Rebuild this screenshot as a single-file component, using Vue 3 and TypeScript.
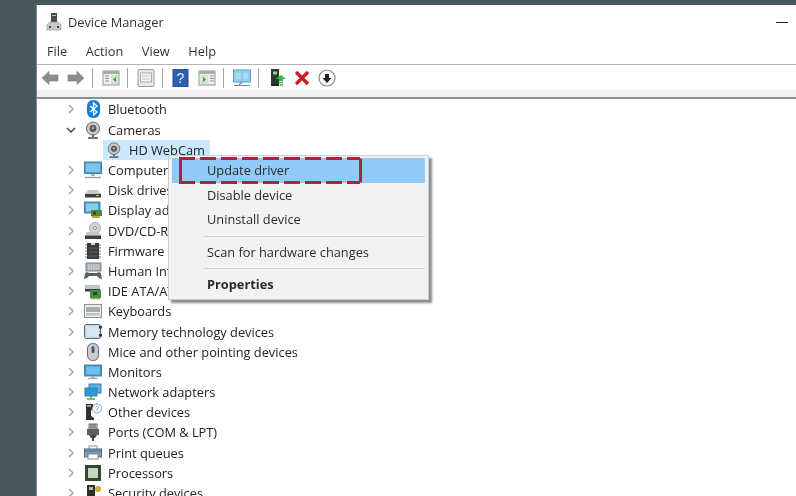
<script setup lang="ts">
interface Row { label: string; icon: string; open?: boolean; child?: boolean }

const icons: Record<string, string> = {
  bluetooth: '<rect x="3" y="0" width="13" height="18" rx="6" fill="#0f7fd8"/><path d="M6 6l7 6-3.500 3V3L13 6l-7 6" fill="none" stroke="#fff" stroke-width="1.300"/>',
  camera: '<circle cx="9" cy="7.500" r="6.500" fill="#c9c9c9" stroke="#666"/><circle cx="9" cy="7.500" r="3.400" fill="#555"/><circle cx="9" cy="7" r="1.400" fill="#aaa"/><path d="M9 14v2" stroke="#666" stroke-width="2"/><path d="M4 17h10" stroke="#555" stroke-width="1.600"/>',
  computer: '<rect x="0.500" y="1" width="17" height="11.500" fill="#3ba3dc" stroke="#5c7f94"/><rect x="2" y="2.500" width="14" height="8.500" fill="#7cc6ee"/><path d="M7 13h4v2H7z" fill="#aab7bf"/><path d="M1 16.500h16" stroke="#8aa0ad" stroke-width="1.400"/>',
  disk: '<path d="M4 9h10l3 4H1z" fill="#c6cac8"/><rect x="1" y="13" width="16" height="3.500" fill="#3d3d3d"/><rect x="12" y="14" width="3" height="1" fill="#8d8"/>',
  display: '<rect x="0.500" y="1" width="15.500" height="11" fill="#3c9ed6" stroke="#5a7d90"/><rect x="2" y="2.500" width="12" height="8" fill="#8accec"/><rect x="7" y="9" width="11" height="6" fill="#4d8a3f"/><path d="M8 15h8v2H8z" fill="#c9a640"/><rect x="9" y="10.500" width="3" height="3" fill="#2c4f2a"/>',
  dvd: '<circle cx="11" cy="6" r="5.500" fill="#d4d4d4" stroke="#aaa"/><circle cx="11" cy="6" r="1.500" fill="#fff" stroke="#888"/><path d="M3 10h12l2 3.500H1z" fill="#c5c8c6"/><rect x="1" y="13.500" width="16" height="3.500" fill="#3d3d3d"/>',
  firmware: '<rect x="3" y="1" width="12" height="16" fill="#3b3b3b"/><path d="M7 1h4v2H7z" fill="#ddd"/><path d="M1 3h2M1 6h2M1 9h2M1 12h2M1 15h2M15 3h2M15 6h2M15 9h2M15 12h2M15 15h2" stroke="#777"/><path d="M5 6h8M5 10h8M5 14h8" stroke="#666"/>',
  human: '<rect x="2" y="1" width="15" height="8" fill="#a9b0b8" stroke="#78828c"/><path d="M4 3h11M4 5h11M4 7h11" stroke="#e4e8ea" stroke-dasharray="1.500 1"/><path d="M0 17l1-5c0-2 3-2 4-1h8c1-1 4-1 4 1l1 5-3-1-2-2H5l-2 2z" fill="#54606a"/>',
  ide: '<rect x="1" y="3" width="15" height="4" fill="#bfc5c3"/><rect x="1" y="7" width="15" height="2.500" fill="#3f3f3f"/><rect x="6" y="8" width="11" height="8" fill="#3d9148"/><path d="M7 16h9v1.500H7z" fill="#c9a640"/><rect x="9" y="10" width="4" height="3" fill="#1d4a24"/>',
  keyboard: '<rect x="0.500" y="2.500" width="17" height="13" fill="#eceeee" stroke="#8c9296"/><rect x="2" y="5" width="14" height="5" fill="#a7acb0"/><rect x="2" y="11" width="14" height="2.500" fill="#c0c4c6"/>',
  memory: '<rect x="0.500" y="1.500" width="16" height="14" rx="2" fill="#c4d8e6" stroke="#5a6670"/><rect x="15" y="3" width="3" height="2.500" fill="#333"/><rect x="15" y="11" width="3" height="2.500" fill="#333"/><rect x="2.500" y="3.500" width="12" height="10" fill="#d9e6ef"/>',
  mouse: '<rect x="3.500" y="0.500" width="11" height="17" rx="5" fill="#c8ccd2" stroke="#5e6670"/><rect x="7.500" y="3" width="3" height="7" rx="1.500" fill="#4f5965"/>',
  monitor: '<rect x="0.500" y="2" width="17" height="11" fill="#2f9ad8" stroke="#5b8096"/><rect x="2" y="3.500" width="14" height="8" fill="#6cc0ef"/><path d="M7 13h4v2H7z" fill="#aab7bf"/><path d="M4 15.500h10" stroke="#9ab" stroke-width="1.200"/>',
  network: '<rect x="5" y="1" width="12" height="9" fill="#5bb0e3" stroke="#3f7ca5"/><rect x="1" y="5" width="12" height="8" fill="#2f96d6" stroke="#3f7ca5"/><path d="M7 13v2M3 16h8" stroke="#46b04c" stroke-width="1.600"/>',
  other: '<path d="M2 1h7v3l-2 4v5l3 2v2H2z" fill="#2f2f2f"/><path d="M3 2h4v2H3z" fill="#8fae8a"/><circle cx="13" cy="5.500" r="4.500" fill="#fff" stroke="#7ca3cb"/><text x="13" y="8" font-size="7" font-family="Liberation Sans" text-anchor="middle" fill="#5a84b0">?</text>',
  ports: '<rect x="5" y="1" width="8" height="5" fill="#b9bcbc" stroke="#777"/><path d="M7 1v4M9 1v4M11 1v4" stroke="#666"/><rect x="3" y="6" width="12" height="6" fill="#5a5f62"/><path d="M5 12h8l-2 3H7z" fill="#444"/><rect x="8" y="15" width="2" height="3" fill="#444"/>',
  print: '<rect x="5" y="2" width="8" height="4" fill="#fff" stroke="#889"/><rect x="0.500" y="5" width="17" height="8" fill="#7f99ad" stroke="#566875"/><rect x="4" y="10" width="10" height="5" fill="#fff" stroke="#889"/><path d="M1 7h16" stroke="#3a88c0" stroke-width="1.500"/>',
  processor: '<rect x="1" y="1" width="16" height="16" fill="#2f4a2f"/><rect x="4" y="4" width="10" height="10" fill="#c5d6bf"/>',
  security: '<rect x="3" y="1" width="8" height="17" fill="#2f2f2f"/><rect x="5" y="3" width="4" height="3" fill="#aac2a4"/><circle cx="14" cy="5" r="3" fill="#d9a63d"/>',
}

const rows: Row[] = [
  { label: 'Bluetooth', icon: 'bluetooth' },
  { label: 'Cameras', icon: 'camera', open: true },
  { label: 'HD WebCam', icon: 'camera', child: true },
  { label: 'Computer', icon: 'computer' },
  { label: 'Disk drives', icon: 'disk' },
  { label: 'Display adapters', icon: 'display' },
  { label: 'DVD/CD-ROM drives', icon: 'dvd' },
  { label: 'Firmware', icon: 'firmware' },
  { label: 'Human Interface Devices', icon: 'human' },
  { label: 'IDE ATA/ATAPI controllers', icon: 'ide' },
  { label: 'Keyboards', icon: 'keyboard' },
  { label: 'Memory technology devices', icon: 'memory' },
  { label: 'Mice and other pointing devices', icon: 'mouse' },
  { label: 'Monitors', icon: 'monitor' },
  { label: 'Network adapters', icon: 'network' },
  { label: 'Other devices', icon: 'other' },
  { label: 'Ports (COM & LPT)', icon: 'ports' },
  { label: 'Print queues', icon: 'print' },
  { label: 'Processors', icon: 'processor' },
  { label: 'Security devices', icon: 'security' },
]
</script>

<template>
  <div class="screen">
    <div class="window">
      <header class="title">
        <svg class="app-icon" viewBox="0 0 16 18" width="16" height="18">
          <rect x="5" y="0" width="6" height="9" fill="#4a4a4a" />
          <rect x="6" y="2" width="4" height="1" fill="#bbb" />
          <path d="M4 9h8l3 3v5H1v-5z" fill="#c9c9c9" stroke="#8a8a8a" stroke-width=".6" />
          <rect x="3" y="13" width="2" height="2" fill="#444" />
          <rect x="11" y="13" width="2" height="2" fill="#444" />
        </svg>
        <span class="title-text">Device Manager</span>
        <span class="minimize"></span>
      </header>
      <nav class="menubar">
        <span>File</span>
        <span>Action</span>
        <span>View</span>
        <span>Help</span>
      </nav>
      <div class="toolbar">
        <svg class="tool" viewBox="0 0 18 18"><path d="M1 9l7-6.500V6h9v6H8v3.500z" fill="#8d8d8d" stroke="#777" stroke-width=".6" /></svg>
        <svg class="tool" viewBox="0 0 18 18"><path d="M17 9l-7-6.500V6H1v6h9v3.500z" fill="#8d8d8d" stroke="#777" stroke-width=".6" /></svg>
        <i class="sep"></i>
        <svg class="tool" viewBox="0 0 18 18">
          <rect x="1" y="2" width="16" height="14" fill="#f2f2ee" stroke="#8f938e" />
          <rect x="1" y="2" width="16" height="3" fill="#a8aba6" />
          <path d="M3 7h4M3 9.500h4M3 12h4" stroke="#8a8f88" stroke-width="1.200" />
          <rect x="9" y="6" width="7" height="9" fill="#d5e0d0" />
          <path d="M14 8v5l-3-2.500z" fill="#3f9a48" />
        </svg>
        <i class="sep"></i>
        <svg class="tool" viewBox="0 0 18 18">
          <rect x="1" y="0.500" width="16" height="17" rx="1" fill="#e8e8e6" stroke="#9a9a98" />
          <rect x="3.500" y="4" width="11" height="9" fill="#f4f4f2" stroke="#aaa" />
          <path d="M5 7h8M5 10h8" stroke="#c4c4c2" />
        </svg>
        <i class="sep"></i>
        <svg class="tool" viewBox="0 0 18 18">
          <rect x="1" y="0" width="15" height="18" fill="#2f5fb0" stroke="#244a90" />
          <text x="8.500" y="14" font-size="14" font-family="Liberation Sans" text-anchor="middle" fill="#e8ecf8">?</text>
        </svg>
        <svg class="tool" viewBox="0 0 18 18">
          <rect x="1" y="2" width="16" height="14" fill="#f2f2ee" stroke="#8f938e" />
          <rect x="1" y="2" width="16" height="3" fill="#a8aba6" />
          <rect x="2.500" y="6" width="8" height="9" fill="#d5e0d0" />
          <path d="M5 8v5l3-2.500z" fill="#3f9a48" />
          <path d="M12 7h4M12 9.500h4M12 12h4" stroke="#8a8f88" stroke-width="1.200" />
        </svg>
        <i class="sep"></i>
        <svg class="tool" viewBox="0 0 18 18">
          <rect x="0.500" y="1" width="17" height="12" fill="#8fd0f0" stroke="#5a9ec4" />
          <path d="M3 4h12v6H3z" fill="#a8dcf4" />
          <path d="M9 4v6" stroke="#6fb6dc" />
          <path d="M9 13l-3 3M1 16.500h16" stroke="#6e8e9e" stroke-width="1.200" fill="none" />
        </svg>
        <i class="sep"></i>
        <svg class="tool narrow push" viewBox="0 0 16 18">
          <rect x="1" y="0" width="8" height="15" fill="#2c3a2e" />
          <rect x="3" y="2.500" width="4" height="3" fill="#a8c4a0" />
          <rect x="1" y="15" width="8" height="2" fill="#222" />
          <path d="M11 6l5 4h-3v2h-4v-2H6z" fill="#3fb34a" />
          <path d="M9 13.500h4M10 16h3" stroke="#3fb34a" stroke-width="1.400" />
        </svg>
        <svg class="tool narrow" viewBox="0 0 16 18"><path d="M2 3l12 12M14 3L2 15" stroke="#cc1d24" stroke-width="3.400" /></svg>
        <svg class="tool" viewBox="0 0 18 18">
          <circle cx="9" cy="9" r="8" fill="#fafafa" stroke="#8a8a8a" stroke-width="1.200" />
          <path d="M9 14l-4.500-5H7V5h4v4h2.500z" fill="#222" />
        </svg>
      </div>
      <div class="strip"></div>
      <ul class="tree">
        <li v-for="row in rows" :key="row.label" class="row" :class="{ child: row.child }">
          <svg v-if="!row.child" class="chevron" viewBox="0 0 10 10" width="10" height="10">
            <path v-if="row.open" d="M1 3l4 4 4-4" fill="none" stroke="#444" stroke-width="1.500" />
            <path v-else d="M3 1l4 4-4 4" fill="none" stroke="#a6a6a6" stroke-width="1.500" />
          </svg>
          <span class="node" :class="{ selected: row.child }">
            <svg class="node-icon" viewBox="0 0 18 18" width="18" height="18" v-html="icons[row.icon]"></svg>
            <span class="node-label">{{ row.label }}</span>
          </span>
        </li>
      </ul>
    </div>

    <div class="context-menu">
      <div class="item active">Update driver</div>
      <div class="item">Disable device</div>
      <div class="item">Uninstall device</div>
      <div class="divider"></div>
      <div class="item">Scan for hardware changes</div>
      <div class="divider"></div>
      <div class="item strong">Properties</div>
    </div>

    <svg class="callout" width="184" height="29" viewBox="0 0 184 29">
      <path d="M1 2.500H182M1 26.500H182" fill="none" stroke="#b0203f" stroke-width="3" stroke-dasharray="16 5" />
      <path d="M2.500 2.500V26.500M182.500 2.500V26.500" fill="none" stroke="#b0203f" stroke-width="3" />
    </svg>
  </div>
</template>

<style>
html, body { margin: 0; overflow: hidden; }
</style>

<style scoped>
.screen {
  position: relative;
  width: 796px;
  height: 496px;
  overflow: hidden;
  background: #47575a;
  padding: 5px 0 0 36px;
  box-sizing: border-box;
  font-family: "Open Sans", "Noto Sans", sans-serif;
  font-size: 12.8px;
  color: #222;
  filter: blur(0.45px);
}
.window {
  height: 491px;
  background: #fff;
  border-left: 1px solid #7d8a8a;
  display: flex;
  flex-direction: column;
  overflow: hidden;
}
.title {
  height: 34px;
  display: flex;
  align-items: center;
  padding: 0 8px 0 9px;
  flex: none;
}
.app-icon { flex: none; }
.title-text { margin-left: 6px; color: #333; }
.minimize {
  margin-left: auto;
  width: 12px;
  height: 1px;
  background: #222;
}
.menubar {
  height: 23px;
  padding: 0 0 2px 10px;
  flex: none;
  display: flex;
  align-items: center;
  gap: 18.5px;
  border-bottom: 1px solid #b4b4b4;
  color: #333;
}
.toolbar {
  height: 25px;
  flex: none;
  display: flex;
  align-items: center;
  gap: 8px;
  padding-left: 4px;
}
.tool { width: 18px; height: 18px; flex: none; }
.tool.narrow { width: 16px; }
.tool.push { margin-left: 2px; }
.sep {
  width: 1px;
  height: 20px;
  background: #a6a6a6;
  margin: 0 1px 0 -1px;
  flex: none;
}
.strip {
  height: 7px;
  flex: none;
  background: #f0f0f0;
  border-bottom: 2px solid #8f8f8f;
}
.tree {
  list-style: none;
  margin: 0;
  padding: 0.4px 0 0;
  flex: none;
}
.row {
  height: 20.2px;
  display: flex;
  align-items: center;
  padding-left: 29px;
  white-space: nowrap;
}
.chevron { flex: none; margin-right: 8px; }
.row.child { padding-left: 66px; }
.node { display: flex; align-items: center; height: 100%; }
.node-icon { flex: none; }
.node-label { margin-left: 6px; }
.node.selected {
  background: #cce8ff;
  padding: 0 5px 0 3px;
}
.node.selected .node-icon { width: 16px; height: 16px; }
.node.selected .node-label { margin-left: 7px; }
.context-menu {
  position: absolute;
  left: 168px;
  top: 155px;
  width: 261px;
  height: 145px;
  padding: 2px 3px;
  box-sizing: border-box;
  background: #f2f2f2;
  border: 1px solid #cfcfcf;
  box-shadow: 3px 3px 2px rgba(0, 0, 0, 0.45);
  color: #2b2b2b;
}
.item {
  height: 24.5px;
  line-height: 24px;
  padding-left: 35px;
}
.item.active { background: #91c9f7; }
.item.strong { font-weight: 700; }
.divider {
  height: 1px;
  background: #d2d2d2;
  margin: 4px 0 3px 32px;
}
.callout {
  position: absolute;
  left: 178px;
  top: 156px;
}
</style>
